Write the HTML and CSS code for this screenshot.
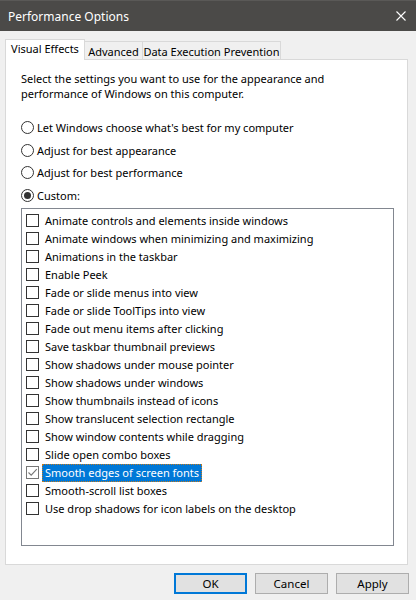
FILE: index.html
```html
<!DOCTYPE html>
<html>
<head>
<meta charset="utf-8">
<link rel="stylesheet" href="styles.css">
</head>
<body>
<div class="window">
  <div class="titlebar">
    <span class="title">Performance Options</span>
    <svg class="close" width="10" height="10" viewBox="0 0 10 10"><path d="M0.5 0.5 L9.5 9.5 M9.5 0.5 L0.5 9.5" stroke="#fff" stroke-width="1.1" fill="none"/></svg>
  </div>
  <div class="tabs">
    <div class="tab tab-active t1">Visual Effects</div>
    <div class="tab t2">Advanced</div>
    <div class="tab t3">Data Execution Prevention</div>
  </div>
  <div class="panel">
    <p class="intro">Select the settings you want to use for the appearance and<br>performance of Windows on this computer.</p>
    <div class="radios">
      <div class="radio-row"><span class="radio"></span><span>Let Windows choose what's best for my computer</span></div>
      <div class="radio-row"><span class="radio"></span><span>Adjust for best appearance</span></div>
      <div class="radio-row"><span class="radio"></span><span>Adjust for best performance</span></div>
      <div class="radio-row"><span class="radio radio-on"></span><span>Custom:</span></div>
    </div>
    <div class="listbox">
      <div class="item"><span class="cb"></span><span class="lbl">Animate controls and elements inside windows</span></div>
      <div class="item"><span class="cb"></span><span class="lbl">Animate windows when minimizing and maximizing</span></div>
      <div class="item"><span class="cb"></span><span class="lbl">Animations in the taskbar</span></div>
      <div class="item"><span class="cb"></span><span class="lbl">Enable Peek</span></div>
      <div class="item"><span class="cb"></span><span class="lbl">Fade or slide menus into view</span></div>
      <div class="item"><span class="cb"></span><span class="lbl">Fade or slide ToolTips into view</span></div>
      <div class="item"><span class="cb"></span><span class="lbl">Fade out menu items after clicking</span></div>
      <div class="item"><span class="cb"></span><span class="lbl">Save taskbar thumbnail previews</span></div>
      <div class="item"><span class="cb"></span><span class="lbl">Show shadows under mouse pointer</span></div>
      <div class="item"><span class="cb"></span><span class="lbl">Show shadows under windows</span></div>
      <div class="item"><span class="cb"></span><span class="lbl">Show thumbnails instead of icons</span></div>
      <div class="item"><span class="cb"></span><span class="lbl">Show translucent selection rectangle</span></div>
      <div class="item"><span class="cb"></span><span class="lbl">Show window contents while dragging</span></div>
      <div class="item"><span class="cb"></span><span class="lbl">Slide open combo boxes</span></div>
      <div class="item"><span class="cb cb-on"><svg width="11" height="11" viewBox="0 0 11 11"><path d="M1.5 5.5 L4.2 8.2 L9.8 2.2" stroke="#777" stroke-width="1.1" fill="none"/></svg></span><span class="lbl lbl-sel">Smooth edges of screen fonts</span></div>
      <div class="item"><span class="cb"></span><span class="lbl">Smooth-scroll list boxes</span></div>
      <div class="item"><span class="cb"></span><span class="lbl">Use drop shadows for icon labels on the desktop</span></div>
    </div>
  </div>
  <div class="buttons">
    <div class="btn btn-default">OK</div>
    <div class="btn">Cancel</div>
    <div class="btn">Apply</div>
  </div>
</div>
</body>
</html>
```
FILE: styles.css
```css
* { box-sizing: border-box; }
html, body { margin: 0; padding: 0; }
body {
  width: 416px;
  height: 600px;
  background: #f0f0f0;
  font-family: "Noto Sans", "Open Sans", sans-serif;
  font-size: 11px;
  color: #000;
  overflow: hidden;
}
.titlebar {
  height: 31px;
  background: #4b4a48;
  border-top: 1px solid #5a5957;
  display: flex;
  align-items: center;
  justify-content: space-between;
  padding: 0 10px 0 8px;
  color: #fff;
}
.title { font-size: 12px; }
.close { display: block; }
.tabs {
  display: flex;
  align-items: flex-end;
  padding-left: 5px;
  margin-top: 8px;
  height: 20px;
  position: relative;
  z-index: 1;
  white-space: nowrap;
}
.tab {
  height: 18px;
  border: 1px solid #d9d9d9;
  border-bottom: none;
  background: #f0f0f0;
  display: flex;
  align-items: center;
  justify-content: center;
  margin-left: -1px;
  line-height: 1;
  padding-top: 1px;
}
.tab.t1 { width: 80px; margin-left: 0; }
.tab.t2 { width: 59px; }
.tab.t3 { width: 139px; }
.tab-active {
  height: 21px;
  background: #fff;
  margin-bottom: -1px;
  padding-top: 0;
  padding-bottom: 3px;
}
.panel {
  width: 403px;
  height: 506px;
  margin-left: 5px;
  background: #fff;
  border: 1px solid #d9d9d9;
  padding: 11px 0 0 15px;
}
.intro {
  margin: 0;
  line-height: 15px;
  white-space: nowrap;
}
.radios {
  margin-top: 15px;
  display: flex;
  flex-direction: column;
}
.radio-row {
  height: 22.7px;
  display: flex;
  align-items: center;
  gap: 3px;
}
.radio {
  width: 13px;
  height: 13px;
  border: 1px solid #333;
  border-radius: 50%;
  display: flex;
  align-items: center;
  justify-content: center;
  flex: none;
}
.radio-on::after {
  content: "";
  width: 7px;
  height: 7px;
  border-radius: 50%;
  background: #333;
}
.listbox {
  margin-top: 1px;
  width: 373px;
  height: 338px;
  border: 1px solid #828790;
  padding: 3px 0 0 4px;
}
.item {
  height: 18px;
  display: flex;
  align-items: center;
}
.cb {
  width: 13px;
  height: 13px;
  border: 1px solid #333;
  flex: none;
  margin-right: 3px;
  display: flex;
  align-items: center;
  justify-content: center;
}
.cb-on { border-color: #777; }
.cb svg { display: block; }
.lbl {
  height: 18px;
  line-height: 16px;
  padding: 0 2px;
  border: 1px solid transparent;
}
.lbl-sel {
  background: #0078d7;
  color: #fff;
  border: 1px dotted #c47a1f;
}
.buttons {
  display: flex;
  justify-content: flex-end;
  gap: 8px;
  padding-right: 7px;
  margin-top: 8px;
}
.btn {
  width: 73px;
  height: 21px;
  background: #e1e1e1;
  border: 1px solid #adadad;
  display: flex;
  align-items: center;
  justify-content: center;
  font-size: 11.5px;
}
.btn-default {
  border: 2px solid #0078d7;
}
```
